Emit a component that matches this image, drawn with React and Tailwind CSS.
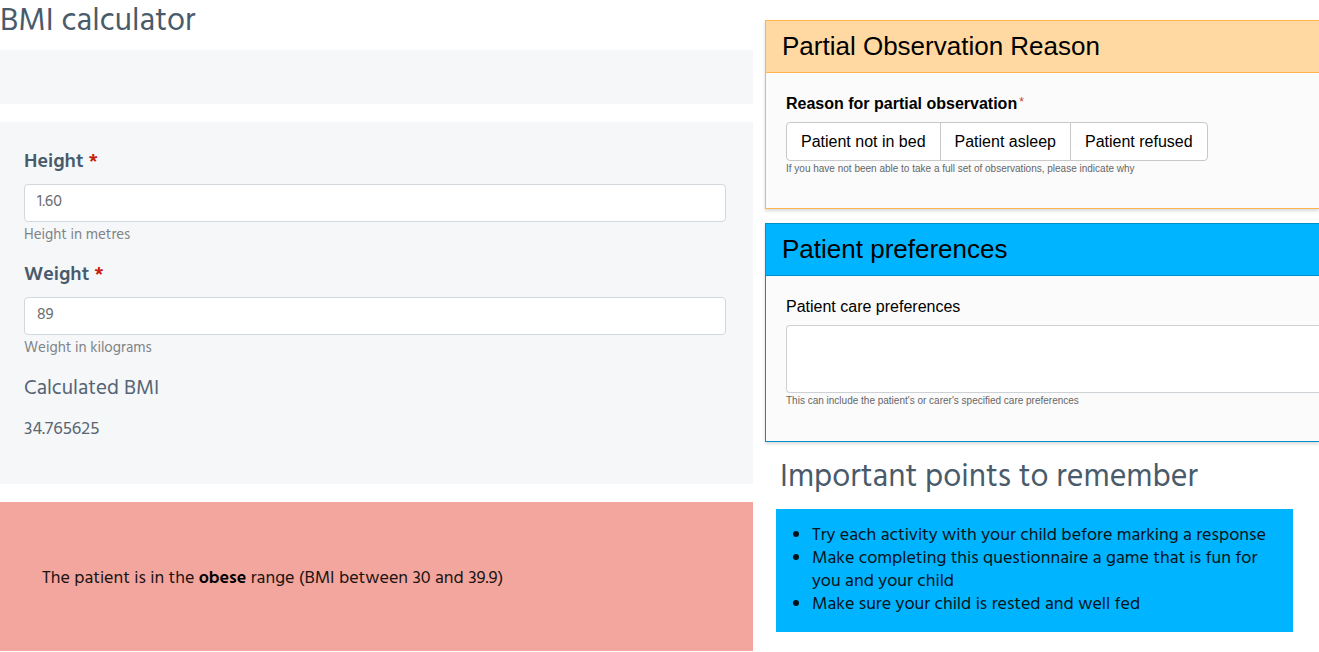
const humanist = "font-['Hind','Noto_Sans',sans-serif]";

function MeasureField({ id, label, hint, value }) {
  return (
    <div className="mb-3.5">
      <label htmlFor={id} className="mb-2 block text-xl leading-7 font-semibold text-[#495b6b]">
        {label} <span className="text-[#c8200c]">*</span>
      </label>
      <input
        id={id}
        type="text"
        defaultValue={value}
        aria-describedby={`${id}-hint`}
        className="block h-[38px] w-full rounded border border-[#d3d8dd] bg-white px-3 pb-0.5 text-base text-[#6a6d70]"
      />
      <p id={`${id}-hint`} className="mt-px text-[15px] leading-6 text-[#808386]">{hint}</p>
    </div>
  );
}

function BmiCalculator() {
  return (
    <section className={`${humanist} min-w-0`}>
      <h1 className="h-[50px] text-[32px] leading-[44px] text-[#495b6b]">BMI calculator</h1>
      <div className="mb-[18px] h-[54px] bg-[#f5f7f9]" />
      <form className="mb-[18px] bg-[#f5f7f9] pt-[26px] pr-[27px] pb-[42px] pl-6">
        <MeasureField id="height" label="Height" hint="Height in metres" value="1.60" />
        <MeasureField id="weight" label="Weight" hint="Weight in kilograms" value="89" />
        <h2 className="mb-3.5 text-[21px] leading-[30px] text-[#556575]">Calculated BMI</h2>
        <output htmlFor="height weight" className="block text-lg leading-6 text-[#5a6672]">34.765625</output>
      </form>
      <div className="bg-[#f3a69d] px-[42px] pt-[65px] pb-[60px]">
        <p className="text-lg leading-6 text-[#1c1413]">
          The patient is in the <strong className="font-semibold text-black">obese</strong> range (BMI between 30 and 39.9)
        </p>
      </div>
    </section>
  );
}

function PartialObservation() {
  const reasons = ["Patient not in bed", "Patient asleep", "Patient refused"];
  return (
    <section className="mb-3.5 border border-r-0 border-[#ffb54d] bg-[#fbfbfb] shadow-[0_2px_3px_rgba(0,0,0,0.15)]">
      <h2 className="border-b border-[#ffb54d] bg-[#ffd9a1] px-4 py-2 text-[26px] leading-[35px] text-black">
        Partial Observation Reason
      </h2>
      <div className="px-5 pt-[19px] pb-[31px]">
        <p id="reason-label" className="mb-1.5 text-base leading-6 font-bold text-black">
          Reason for partial observation
          <span className="ml-0.5 align-top text-xs leading-5 font-normal text-[#c8401c]">*</span>
        </p>
        <div role="group" aria-labelledby="reason-label" className="flex">
          {reasons.map((reason) => (
            <button
              key={reason}
              type="button"
              className="-ml-px border border-[#c8c8c8] bg-white px-3.5 py-[7px] text-base leading-[23px] whitespace-nowrap text-black first:ml-0 first:rounded-l last:rounded-r"
            >
              {reason}
            </button>
          ))}
        </div>
        <p className="text-[10px] leading-4 text-[#666]">
          If you have not been able to take a full set of observations, please indicate why
        </p>
      </div>
    </section>
  );
}

function PatientPreferences() {
  return (
    <section className="border border-r-0 border-[#0090c8] bg-[#fbfbfb] shadow-[0_2px_3px_rgba(0,0,0,0.15)]">
      <h2 className="border-b border-[#0090c8] bg-[#00b4ff] px-4 py-2 text-[26px] leading-[35px] text-black">
        Patient preferences
      </h2>
      <div className="pt-[19px] pb-8 pl-5">
        <label htmlFor="preferences" className="mb-1.5 block text-base leading-6 text-black">
          Patient care preferences
        </label>
        <textarea
          id="preferences"
          className="block h-[68px] w-full resize-none rounded-l border border-r-0 border-[#ccd1d6] bg-white p-2 text-base"
        />
        <p className="text-[10px] leading-4 text-[#666]">
          This can include the patient's or carer's specified care preferences
        </p>
      </div>
    </section>
  );
}

function ImportantPoints() {
  return (
    <section className={`${humanist} pr-[26px] pl-[11px]`}>
      <h2 className="px-1 pt-4 pb-[11px] text-[32px] leading-10 text-[#495b6b]">Important points to remember</h2>
      <ul className="list-disc bg-[#00b4ff] pt-[15px] pr-6 pb-4 pl-9 text-lg leading-[23px] text-[#04141c]">
        <li>Try each activity with your child before marking a response</li>
        <li>Make completing this questionnaire a game that is fun for you and your child</li>
        <li>Make sure your child is rested and well fed</li>
      </ul>
    </section>
  );
}

export default function App() {
  return (
    <main className="grid grid-cols-[753fr_566fr] bg-white font-['Liberation_Sans',Arial,sans-serif]">
      <BmiCalculator />
      <div className="min-w-0 pt-5 pl-3">
        <PartialObservation />
        <PatientPreferences />
        <ImportantPoints />
      </div>
    </main>
  );
}
